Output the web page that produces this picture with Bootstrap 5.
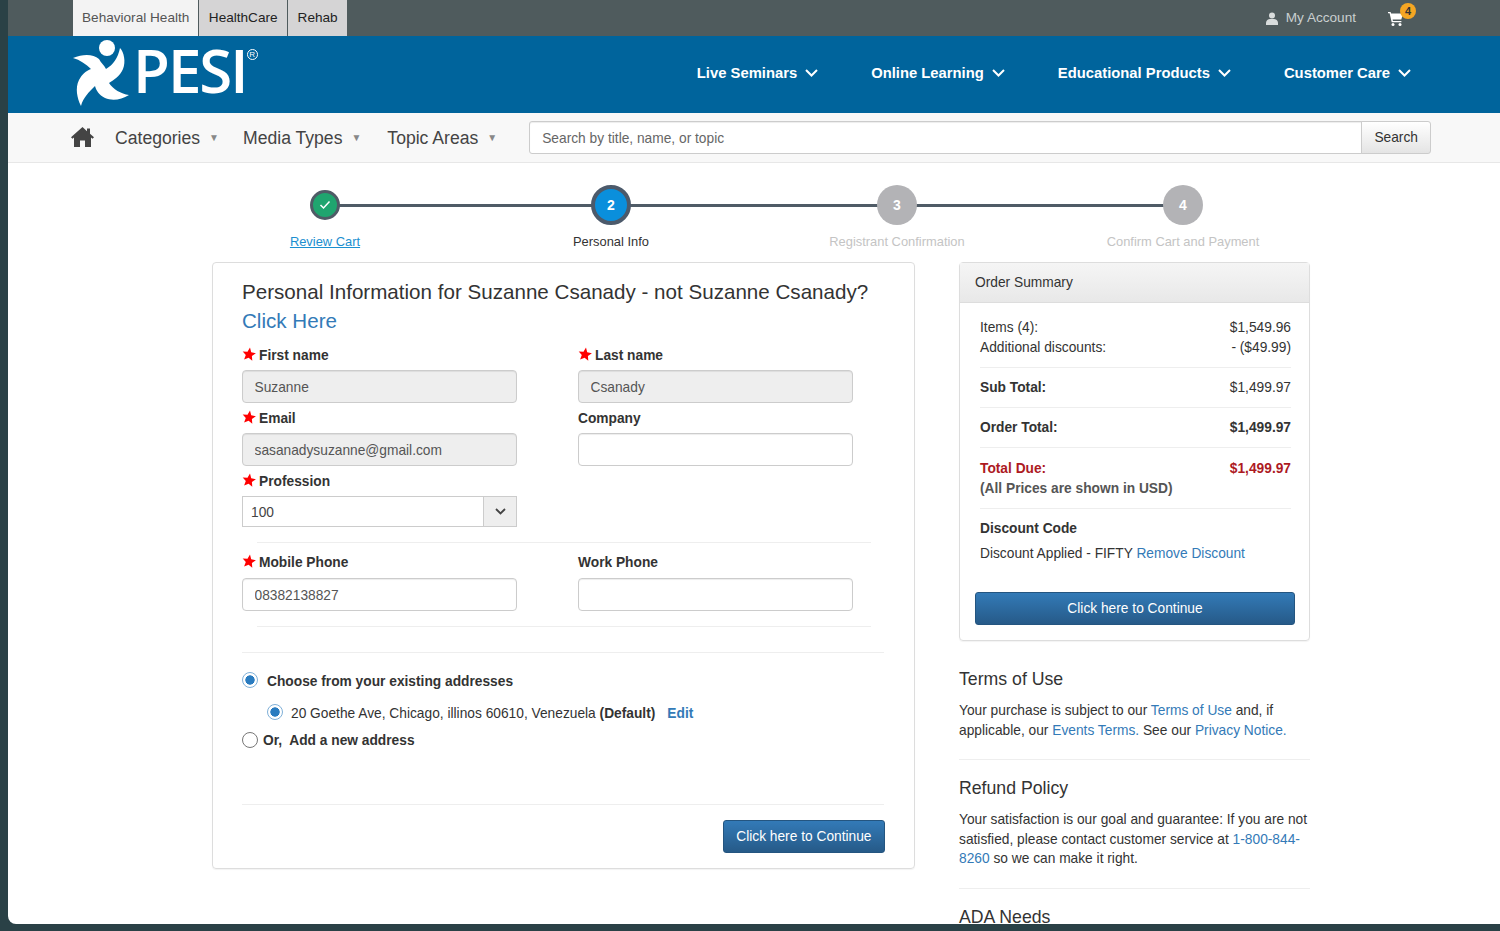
<!DOCTYPE html>
<html lang="en">
<head>
    <meta charset="UTF-8">
    <meta name="viewport" content="width=device-width, initial-scale=1.0">
    <title>PESI Checkout</title>
    <link href="https://cdn.jsdelivr.net/npm/bootstrap@5.3.0/dist/css/bootstrap.min.css" rel="stylesheet">
    <style>
        html, body { height: 100%; overflow: hidden; }
        body { background: #2a4146; font-family: "Liberation Sans", Arial, sans-serif; font-size: 13.75px; color: #333; line-height: 20px; }
        a { color: #337ab7; text-decoration: none; }
        .app-window { margin-left: 8px; height: 924px; background: #fff; overflow: hidden; border-bottom-left-radius: 8px; }

        .top-strip { height: 36px; background: #4f5b5d; padding: 0 84px 0 65px; }
        .site-tab { display: flex; align-items: center; height: 36px; padding: 0 9.5px; margin-right: 1px; font-size: 13.6px; color: #222; background: #d5d4d5; }
        .site-tab.current { background: #f3f3f3; color: #555; padding: 0 9px; }
        .account-link { color: #c9cfcf; font-size: 13.6px; }
        .cart-link { margin-left: 32px; width: 28px; height: 20px; position: relative; }
        .cart-count { position: absolute; left: 12px; top: -5px; width: 16px; height: 16px; border-radius: 50%; background: #f5a623; color: #333; font-size: 11px; font-weight: 700; line-height: 16px; text-align: center; }

        .brand-bar { height: 77px; background: #00649c; padding-left: 63px; padding-right: 89px; }
        .brand-word { font-family: "Open Sans", sans-serif; font-size: 60px; line-height: 60px; color: #fff; letter-spacing: -2px; margin-left: 2px; margin-top: -10px; font-weight: 600; }
        .brand-reg { font-size: 8px; color: #fff; border: 1px solid #fff; border-radius: 50%; width: 11px; height: 11px; line-height: 9px; text-align: center; margin-top: -40px; margin-left: 0; }
        .main-link { color: #fff; font-weight: 700; font-size: 14.8px; margin-left: 53px; gap: 8px; }
        .main-link:first-child { margin-left: 0; }

        .sub-bar { height: 50px; background: #f8f8f8; border-bottom: 1px solid #e7e7e7; padding-left: 63px; }
        .sub-link { color: #444; font-size: 17.6px; gap: 9px; margin-left: 21px; }
        .sub-link + .sub-link { margin-left: 24px; }
        .sub-link + .sub-link + .sub-link { margin-left: 26px; }
        .sub-link i { font-style: normal; font-size: 10px; color: #888; }
        .sub-bar .input-group { width: 902px; margin-left: 32px; }
        .sub-bar .form-control { height: 33px; font-size: 13.75px; border-color: #ccc; border-radius: 3px 0 0 3px; color: #555; padding: 1px 12px 0; box-shadow: inset 0 1px 1px rgba(0,0,0,.075); }
        .sub-bar .form-control::placeholder { color: #666; }
        .search-btn { height: 33px; width: 70px; font-size: 13.75px; color: #333; border: 1px solid #ccc; padding: 1px 0 0; background: linear-gradient(#fff, #e4e4e4); border-radius: 0 3px 3px 0; }

        .steps-row { margin: 22px 0 0 174px; width: 1144px; }
        .step-item { flex: 0 0 286px; text-align: center; position: relative; font-size: 12.9px; color: #333; }
        .step-item + .step-item::before { content: ""; position: absolute; left: -143px; width: 286px; top: 19px; height: 3px; background: #4f5b66; }
        .step-dot-wrap { height: 40px; display: flex; align-items: center; justify-content: center; position: relative; z-index: 1; }
        .step-dot { display: flex; align-items: center; justify-content: center; border-radius: 50%; color: #fff; font-weight: 700; font-size: 14px; width: 40px; height: 40px; }
        .step-dot.done { width: 30px; height: 30px; background: #1fa56f; border: 3px solid #4f5b66; }
        .step-dot.active { background: #0a8fdc; border: 4px solid #4c5a6b; }
        .step-dot.todo { background: #b3b3b6; }
        .step-label { margin-top: 7px; line-height: 20px; }
        .step-label a { color: #1c8fd0; text-decoration: underline; }
        .step-item.off .step-label { color: #c4c4c4; }

        .columns-wrap { margin: 10px 0 0 204px; width: 1098px; gap: 44px; }
        .form-box { width: 703px; height: 607px; flex: none; border: 1px solid #ddd; border-radius: 4px; box-shadow: 0 1px 1px rgba(0,0,0,.05); padding: 14px 30px 0 29px; }
        .form-title { font-size: 20.6px; line-height: 29px; font-weight: 400; margin: 0 0 11px; color: #333; white-space: nowrap; }
        .field-row { display: flex; gap: 61px; }
        .field-cell { width: 275px; }
        .field-label { display: flex; align-items: center; gap: 3px; font-weight: 700; line-height: 20px; margin: 0 0 4px; color: #333; }
        .field-label svg { margin-top: -5px; }
        .form-box .form-control { height: 33px; font-size: 13.75px; padding: 1px 11.5px 0; color: #555; border-color: #ccc; border-radius: 4px; margin-bottom: 6px; box-shadow: inset 0 1px 1px rgba(0,0,0,.075); }
        .form-box .form-control:disabled { background: #eee; }
        .prof-group { height: 31px; }
        .prof-group .form-select { height: 31px; padding: 4px 8px 0; font-size: 13.75px; color: #444; background-image: none; border-color: #ccc; border-radius: 0; }
        .prof-group .input-group-text { width: 34px; padding: 0; justify-content: center; background: #eee; border-color: #ccc; border-radius: 0; }
        .soft-rule { border: 0; border-top: 1px solid #eee; opacity: 1; margin: 0; }
        .soft-rule.inset { margin-left: 15px; margin-right: 13px; }
        .form-check-input.pick { width: 16px; height: 16px; margin: 0; flex: none; border: 1px solid #777; float: none; }
        .form-check-input.pick:checked { background: radial-gradient(circle, #2a7cc0 44%, #fff 50%); border-color: #7fb0d8; }
        .address-row { display: flex; align-items: center; font-weight: 700; }
        .submit-btn { background: linear-gradient(#337ab7, #265a88); border: 1px solid #245580; color: #fff; font-size: 13.75px; height: 33px; padding: 1px 12.5px 0; border-radius: 3px; }

        .summary-box { height: 379px; border: 1px solid #ddd; border-radius: 4px; box-shadow: 0 1px 1px rgba(0,0,0,.05); }
        .summary-head { height: 40px; padding: 0 15px; display: flex; align-items: center; background: linear-gradient(#f5f5f5, #e8e8e8); border-bottom: 1px solid #ddd; color: #333; }
        .summary-body { padding: 15px 18px 0 20px; }
        .summary-line { display: flex; justify-content: space-between; }
        .total-due { color: #ad1a1f; font-weight: 700; }
        .side-head { font-size: 17.7px; line-height: 20px; font-weight: 400; margin: 0; color: #333; }
        .side-text { margin: 0; line-height: 19.6px; }
    </style>
</head>
<body>
    <div class="app-window">
        <div class="top-strip d-flex align-items-start">
            <a class="site-tab current" href="#">Behavioral Health</a>
            <a class="site-tab" href="#">HealthCare</a>
            <a class="site-tab" href="#">Rehab</a>
            <div class="ms-auto d-flex align-items-center" style="height:36px">
                <a class="account-link d-flex align-items-center gap-2" href="#">
                    <svg width="12" height="13" viewBox="0 0 12 13" fill="#d8dcdc"><circle cx="6" cy="3.4" r="3"/><path d="M0 13v-2.2C0 8.6 2.2 7 4 7h4c1.800 0 4 1.600 4 3.800V13z"/></svg>
                    My Account
                </a>
                <a class="cart-link d-block" href="#">
                    <svg width="15" height="14" viewBox="0 0 15 14" fill="#fff" style="display:block;margin-top:4px"><path d="M0 0h2.600l.5 1.600H15l-1.700 6H4.600l.3 1.300h8.500v1.300H3.700L1.600 1.300H0z"/><circle cx="5" cy="12.400" r="1.500"/><circle cx="12" cy="12.400" r="1.500"/></svg>
                    <span class="cart-count">4</span>
                </a>
            </div>
        </div>

        <div class="brand-bar d-flex align-items-center">
            <svg width="60" height="70" viewBox="0 0 60 70" fill="#fff" style="margin-top:-3px;flex:none">
                <circle cx="36" cy="10" r="8"/>
                <path d="M2 20C12 16 22 16 28 21C30 25 33 27 35 31C42 27 47 20 49 10C53 14 55 24 52 31C49 38 43 42 38 45C42 51 50 56 58 57C50 62 41 63 34 60C28 57 25 52 24 48C18 54 12 60 10 68C6 60 4 50 8 42C11 36 15 33 20 31C15 26 9 22 2 20Z"/>
            </svg>
            <span class="brand-word">PESI</span>
            <span class="brand-reg">R</span>
            <div class="ms-auto d-flex align-items-center" style="margin-top:-3px">
                <a class="main-link d-flex align-items-center" href="#">Live Seminars <svg width="13" height="8" viewBox="0 0 13 8" fill="none" stroke="#fff" stroke-width="2"><path d="M1 1l5.500 5.500L12 1"/></svg></a>
                <a class="main-link d-flex align-items-center" href="#">Online Learning <svg width="13" height="8" viewBox="0 0 13 8" fill="none" stroke="#fff" stroke-width="2"><path d="M1 1l5.500 5.500L12 1"/></svg></a>
                <a class="main-link d-flex align-items-center" href="#">Educational Products <svg width="13" height="8" viewBox="0 0 13 8" fill="none" stroke="#fff" stroke-width="2"><path d="M1 1l5.500 5.500L12 1"/></svg></a>
                <a class="main-link d-flex align-items-center" href="#">Customer Care <svg width="13" height="8" viewBox="0 0 13 8" fill="none" stroke="#fff" stroke-width="2"><path d="M1 1l5.500 5.500L12 1"/></svg></a>
            </div>
        </div>

        <div class="sub-bar d-flex align-items-center">
            <a href="#" class="d-block" style="height:21px">
                <svg width="23" height="20" viewBox="0 0 23 20" fill="#444" style="display:block"><path d="M11.500 0L0 10.200l1.500 1.600L3 10.500V20h6v-6.500h5V20h6v-9.500l1.500 1.300 1.500-1.600-4-3.500V1.500h-3v2.800z"/></svg>
            </a>
            <a class="sub-link d-flex align-items-center" href="#">Categories <i>▼</i></a>
            <a class="sub-link d-flex align-items-center" href="#">Media Types <i>▼</i></a>
            <a class="sub-link d-flex align-items-center" href="#">Topic Areas <i>▼</i></a>
            <div class="input-group">
                <input class="form-control" type="text" placeholder="Search by title, name, or topic">
                <button class="search-btn" type="button">Search</button>
            </div>
        </div>

        <div class="steps-row d-flex">
            <div class="step-item">
                <div class="step-dot-wrap"><span class="step-dot done"><svg width="12" height="10" viewBox="0 0 12 10" fill="none" stroke="#fff" stroke-width="1.500"><path d="M1.500 5l3 3 6-6.500"/></svg></span></div>
                <div class="step-label"><a href="#">Review Cart</a></div>
            </div>
            <div class="step-item">
                <div class="step-dot-wrap"><span class="step-dot active">2</span></div>
                <div class="step-label">Personal Info</div>
            </div>
            <div class="step-item off">
                <div class="step-dot-wrap"><span class="step-dot todo">3</span></div>
                <div class="step-label">Registrant Confirmation</div>
            </div>
            <div class="step-item off">
                <div class="step-dot-wrap"><span class="step-dot todo">4</span></div>
                <div class="step-label">Confirm Cart and Payment</div>
            </div>
        </div>

        <svg width="0" height="0" style="position:absolute">
            <symbol id="req-star" viewBox="0 0 14 14"><path fill="#f00" d="M8 .6L9.200 5.200 13.900 6.300 9.900 8.900 10.300 13.700 6.600 10.700 2.100 12.500 3.800 8.100 .7 4.400 5.500 4.700z"/></symbol>
        </svg>

        <div class="columns-wrap d-flex align-items-start">
            <div class="form-box">
                <h1 class="form-title">Personal Information for Suzanne Csanady - not Suzanne Csanady?<br><a href="#">Click Here</a></h1>
                <div class="field-row">
                    <div class="field-cell">
                        <label class="field-label"><svg width="14" height="14"><use href="#req-star"/></svg>First name</label>
                        <input class="form-control" type="text" value="Suzanne" disabled>
                    </div>
                    <div class="field-cell">
                        <label class="field-label"><svg width="14" height="14"><use href="#req-star"/></svg>Last name</label>
                        <input class="form-control" type="text" value="Csanady" disabled>
                    </div>
                </div>
                <div class="field-row">
                    <div class="field-cell">
                        <label class="field-label"><svg width="14" height="14"><use href="#req-star"/></svg>Email</label>
                        <input class="form-control" type="text" value="sasanadysuzanne@gmail.com" disabled>
                    </div>
                    <div class="field-cell">
                        <label class="field-label">Company</label>
                        <input class="form-control" type="text">
                    </div>
                </div>
                <div class="field-row">
                    <div class="field-cell">
                        <label class="field-label"><svg width="14" height="14"><use href="#req-star"/></svg>Profession</label>
                        <div class="input-group prof-group">
                            <select class="form-select"><option>100</option></select>
                            <span class="input-group-text"><svg width="11" height="7" viewBox="0 0 11 7" fill="none" stroke="#444" stroke-width="1.800"><path d="M1 1l4.500 4.500L10 1"/></svg></span>
                        </div>
                    </div>
                </div>
                <hr class="soft-rule inset" style="margin-top:15px;margin-bottom:10px">
                <div class="field-row">
                    <div class="field-cell">
                        <label class="field-label" style="margin-bottom:5px"><svg width="14" height="14"><use href="#req-star"/></svg>Mobile Phone</label>
                        <input class="form-control" type="text" value="08382138827">
                    </div>
                    <div class="field-cell">
                        <label class="field-label" style="margin-bottom:5px">Work Phone</label>
                        <input class="form-control" type="text">
                    </div>
                </div>
                <hr class="soft-rule inset" style="margin-top:9px">
                <hr class="soft-rule" style="margin-top:25px;margin-bottom:15px">
                <div class="address-row" style="gap:9px">
                    <input class="form-check-input pick" type="radio" name="addrMode" checked>
                    <span style="margin-top:4px">Choose from your existing addresses</span>
                </div>
                <div class="address-row" style="margin:9px 0 0 25px;gap:8px">
                    <input class="form-check-input pick" type="radio" name="addrPick" checked style="margin-top:-2px">
                    <span style="font-weight:400;margin-top:3px">20 Goethe Ave, Chicago, illinos 60610, Venezuela <b>(Default)</b></span>
                    <a href="#" style="margin:3px 0 0 4px">Edit</a>
                </div>
                <div class="address-row" style="margin-top:4px;gap:5px">
                    <input class="form-check-input pick" type="radio" name="addrMode">
                    <span style="margin-top:3px">Or,&nbsp; Add a new address</span>
                </div>
                <hr class="soft-rule" style="margin-top:53px;margin-bottom:15px">
                <div class="d-flex justify-content-end" style="margin-right:-1px">
                    <button class="submit-btn" type="button">Click here to Continue</button>
                </div>
            </div>

            <div class="flex-grow-1">
                <div class="summary-box">
                    <div class="summary-head">Order Summary</div>
                    <div class="summary-body">
                        <div class="summary-line"><span>Items (4):</span><span>$1,549.96</span></div>
                        <div class="summary-line" style="margin-bottom:9px"><span>Additional discounts:</span><span>- ($49.99)</span></div>
                        <hr class="soft-rule">
                        <div class="summary-line" style="margin:10px 0 9px"><b>Sub Total:</b><span>$1,499.97</span></div>
                        <hr class="soft-rule">
                        <div class="summary-line" style="margin:10px 0 9px"><b>Order Total:</b><b>$1,499.97</b></div>
                        <hr class="soft-rule">
                        <div class="summary-line total-due" style="margin-top:11px"><span>Total Due:</span><span>$1,499.97</span></div>
                        <div style="margin-bottom:9px;font-weight:700;color:#555">(All Prices are shown in USD)</div>
                        <hr class="soft-rule">
                        <div style="margin-top:10px;font-weight:700">Discount Code</div>
                        <div style="margin-top:5px">Discount Applied - FIFTY <a href="#">Remove Discount</a></div>
                    </div>
                    <div style="padding:28px 14px 0 15px">
                        <button class="submit-btn w-100" type="button">Click here to Continue</button>
                    </div>
                </div>

                <h2 class="side-head" style="margin-top:28px">Terms of Use</h2>
                <p class="side-text" style="margin-top:12px">Your purchase is subject to our <a href="#">Terms of Use</a> and, if applicable, our <a href="#">Events Terms.</a> See our <a href="#">Privacy Notice.</a></p>
                <hr class="soft-rule" style="margin:19px 0 18px">
                <h2 class="side-head">Refund Policy</h2>
                <p class="side-text" style="margin-top:12px">Your satisfaction is our goal and guarantee: If you are not satisfied, please contact customer service at <a href="#">1-800-844-8260</a> so we can make it right.</p>
                <hr class="soft-rule" style="margin:19px 0 18px">
                <h2 class="side-head">ADA Needs</h2>
            </div>
        </div>
    </div>

    <script src="https://cdn.jsdelivr.net/npm/bootstrap@5.3.0/dist/js/bootstrap.bundle.min.js"></script>
</body>
</html>
